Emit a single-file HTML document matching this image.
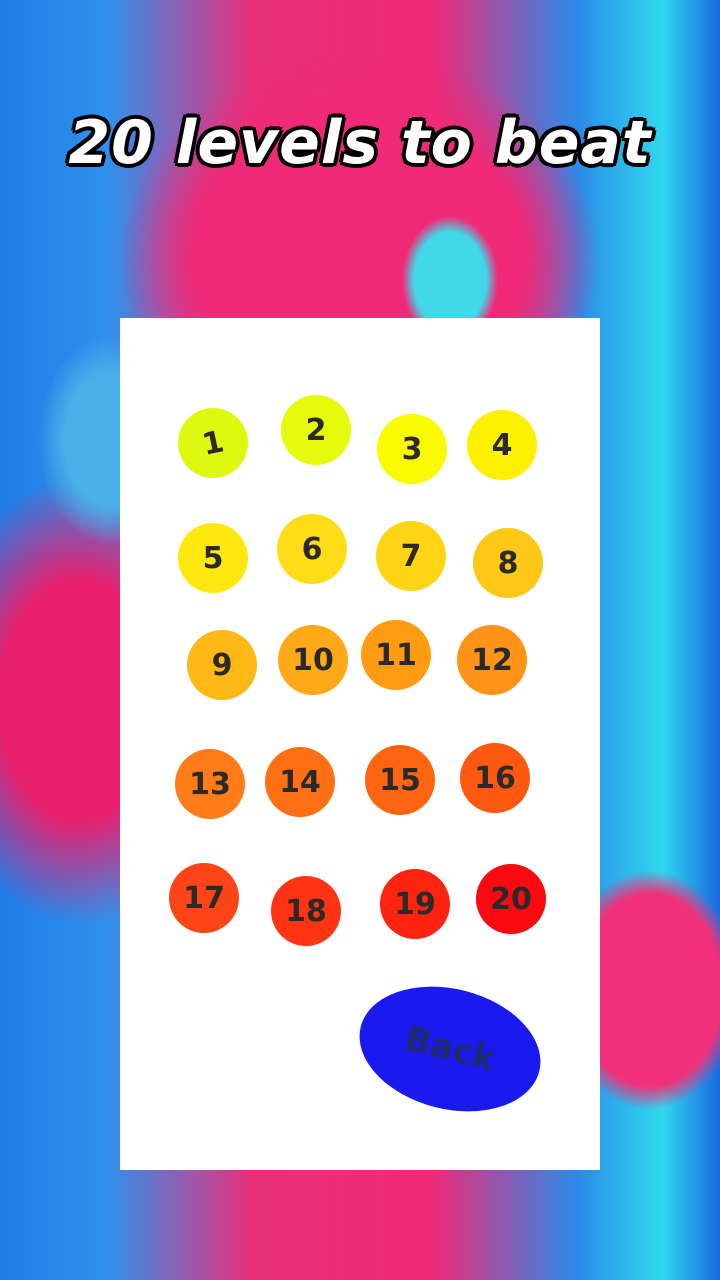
<!DOCTYPE html>
<html><head><meta charset="utf-8"><style>
html,body{margin:0;padding:0;width:720px;height:1280px;overflow:hidden}
body{position:relative;background:
radial-gradient(ellipse 120px 160px at 650px 990px,#f0307a 60%,transparent 75%),
radial-gradient(ellipse 60px 80px at 450px 280px,#40d8e8 60%,transparent 80%),
radial-gradient(ellipse 90px 130px at 110px 440px,#4ab0e8 50%,transparent 80%),
radial-gradient(ellipse 300px 260px at 360px 260px,#f02a78 55%,transparent 80%),
radial-gradient(ellipse 200px 300px at 80px 700px,#e8206e 40%,transparent 75%),
linear-gradient(90deg,#1e7ee8 0%,#3090ec 15%,#e8307a 35%,#f02a78 60%,#2a8ae8 80%,#30d8f0 92%,#1a6ae0 100%);}
.title{position:absolute;left:0;width:720px;top:108px;text-align:center;font:italic bold 60px "DejaVu Sans","Liberation Sans",sans-serif;color:#fff;
-webkit-text-stroke:0;text-shadow:-3px -3px 0 #000,3px -3px 0 #000,-3px 3px 0 #000,3px 3px 0 #000,0 4px 0 #000,0 -4px 0 #000,4px 0 0 #000,-4px 0 0 #000;letter-spacing:1px}
.panel{position:absolute;left:120px;top:318px;width:480px;height:852px;background:#fff}
.c{position:absolute;width:70px;height:70px;border-radius:50%;display:flex;align-items:center;justify-content:center;font:bold 30px "DejaVu Sans","Liberation Sans",sans-serif;color:#2a2a2a}
.back{position:absolute;left:358px;top:989px;width:184px;height:120px;border-radius:50%;background:#1a1aee;transform:rotate(14deg);display:flex;align-items:center;justify-content:center;font:bold 34px "DejaVu Sans",sans-serif;color:#222a70}
</style></head><body>
<div class="title">20 levels to beat</div>
<div class="panel"></div>
<div class="c" style="left:178px;top:408px;background:#def810;transform:rotate(-12deg)">1</div>
<div class="c" style="left:281px;top:395px;background:#e6fa0c">2</div>
<div class="c" style="left:377px;top:414px;background:#fafa00">3</div>
<div class="c" style="left:467px;top:410px;background:#fff000">4</div>
<div class="c" style="left:178px;top:523px;background:#ffe810">5</div>
<div class="c" style="left:277px;top:514px;background:#ffdc18">6</div>
<div class="c" style="left:376px;top:521px;background:#ffd414">7</div>
<div class="c" style="left:473px;top:528px;background:#ffc818">8</div>
<div class="c" style="left:187px;top:630px;background:#ffb818">9</div>
<div class="c" style="left:278px;top:625px;background:#ffa818">10</div>
<div class="c" style="left:361px;top:620px;background:#ff9c14">11</div>
<div class="c" style="left:457px;top:625px;background:#ff9418">12</div>
<div class="c" style="left:175px;top:749px;background:#ff7c18">13</div>
<div class="c" style="left:265px;top:747px;background:#ff7014">14</div>
<div class="c" style="left:365px;top:745px;background:#ff6410">15</div>
<div class="c" style="left:460px;top:743px;background:#ff5810">16</div>
<div class="c" style="left:169px;top:863px;background:#ff4418">17</div>
<div class="c" style="left:271px;top:876px;background:#ff3414">18</div>
<div class="c" style="left:380px;top:869px;background:#ff2410">19</div>
<div class="c" style="left:476px;top:864px;background:#f80a10">20</div>
<div class="back">Back</div>
</body></html>
